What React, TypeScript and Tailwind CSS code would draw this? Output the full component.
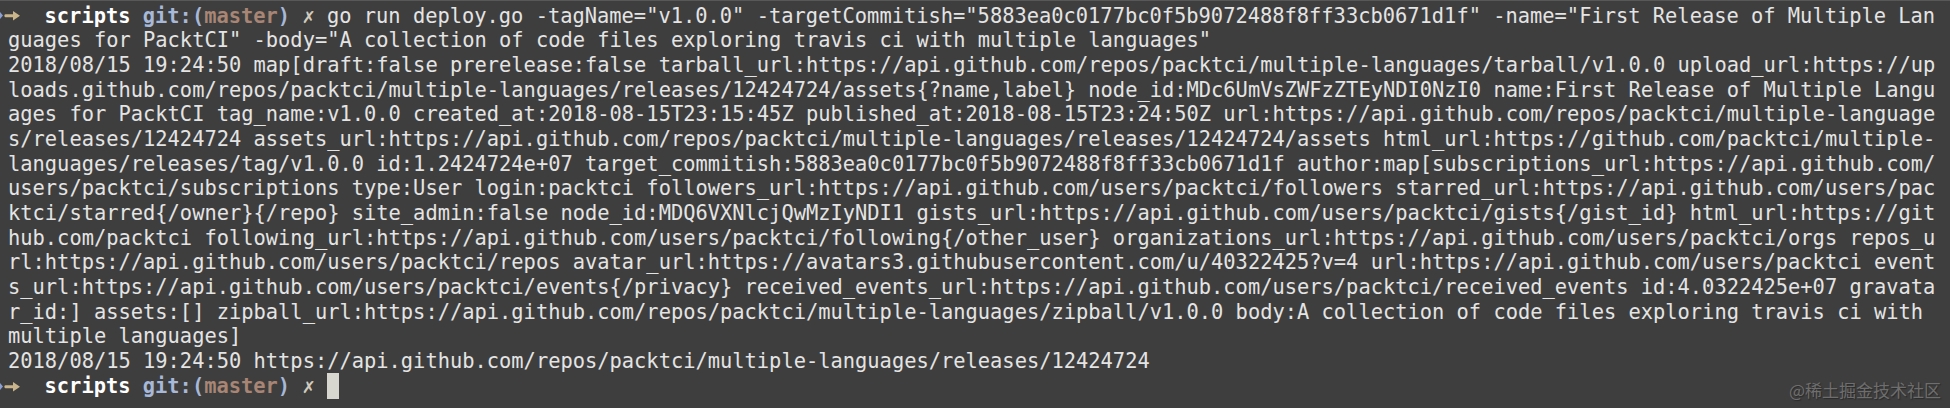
const outputLines = [
  'guages for PacktCI" -body="A collection of code files exploring travis ci with multiple languages"',
  "2018/08/15 19:24:50 map[draft:false prerelease:false tarball_url:https://api.github.com/repos/packtci/multiple-languages/tarball/v1.0.0 upload_url:https://up",
  "loads.github.com/repos/packtci/multiple-languages/releases/12424724/assets{?name,label} node_id:MDc6UmVsZWFzZTEyNDI0NzI0 name:First Release of Multiple Langu",
  "ages for PacktCI tag_name:v1.0.0 created_at:2018-08-15T23:15:45Z published_at:2018-08-15T23:24:50Z url:https://api.github.com/repos/packtci/multiple-language",
  "s/releases/12424724 assets_url:https://api.github.com/repos/packtci/multiple-languages/releases/12424724/assets html_url:https://github.com/packtci/multiple-",
  "languages/releases/tag/v1.0.0 id:1.2424724e+07 target_commitish:5883ea0c0177bc0f5b9072488f8ff33cb0671d1f author:map[subscriptions_url:https://api.github.com/",
  "users/packtci/subscriptions type:User login:packtci followers_url:https://api.github.com/users/packtci/followers starred_url:https://api.github.com/users/pac",
  "ktci/starred{/owner}{/repo} site_admin:false node_id:MDQ6VXNlcjQwMzIyNDI1 gists_url:https://api.github.com/users/packtci/gists{/gist_id} html_url:https://git",
  "hub.com/packtci following_url:https://api.github.com/users/packtci/following{/other_user} organizations_url:https://api.github.com/users/packtci/orgs repos_u",
  "rl:https://api.github.com/users/packtci/repos avatar_url:https://avatars3.githubusercontent.com/u/40322425?v=4 url:https://api.github.com/users/packtci event",
  "s_url:https://api.github.com/users/packtci/events{/privacy} received_events_url:https://api.github.com/users/packtci/received_events id:4.0322425e+07 gravata",
  "r_id:] assets:[] zipball_url:https://api.github.com/repos/packtci/multiple-languages/zipball/v1.0.0 body:A collection of code files exploring travis ci with",
  "multiple languages]",
  "2018/08/15 19:24:50 https://api.github.com/repos/packtci/multiple-languages/releases/12424724",
];

function Arrow() {
  return (
    <svg width="20" height="25" viewBox="0 0 20 25" className="-ml-2 shrink-0">
      <polygon points="0,9 3,12.5 0,16" fill="#8d9fd0" />
      <rect x="4.5" y="11.3" width="10" height="3" rx="1" fill="#c9b48c" />
      <polygon points="13,8 20,12.8 13,17.6" fill="#c9b48c" />
    </svg>
  );
}

function Prompt({ command, cursor }: { command?: string; cursor?: boolean }) {
  return (
    <div className="flex items-center h-[24.7px]">
      <Arrow />
      <span className="whitespace-pre">
        {"  "}
        <span className="font-bold text-white">scripts</span>{" "}
        <span className="font-bold text-[#a7b8d8]">git:(</span>
        <span className="font-bold text-[#a88574]">master</span>
        <span className="font-bold text-[#a7b8d8]">)</span>{" "}
        <span className="text-[#d2cbbd]">✗</span>{" "}
        {command}
      </span>
      {cursor && <span className="inline-block w-[12.3px] h-[26px] bg-[#d7d7cf]" />}
    </div>
  );
}

export default function App() {
  return (
    <div className="relative w-[1950px] h-[408px] overflow-hidden bg-[#3e3e3e] border-t border-[#585858] pl-[8px] pt-[2.5px] font-['DejaVu_Sans_Mono',monospace] text-[20.4px] leading-[24.7px] text-[#e4e4e4]">
      <Prompt command='go run deploy.go -tagName="v1.0.0" -targetCommitish="5883ea0c0177bc0f5b9072488f8ff33cb0671d1f" -name="First Release of Multiple Lan' />
      {outputLines.map((line, i) => (
        <div key={i} className="whitespace-pre h-[24.7px]">
          {line}
        </div>
      ))}
      <Prompt cursor />
      <div className="absolute right-[9px] bottom-[10px] font-['Noto_Sans_CJK_SC',sans-serif] text-[17px] leading-none text-[#6e6e6e] [text-shadow:1px_1px_1px_#2a2a2a]">
        @稀土掘金技术社区
      </div>
    </div>
  );
}
